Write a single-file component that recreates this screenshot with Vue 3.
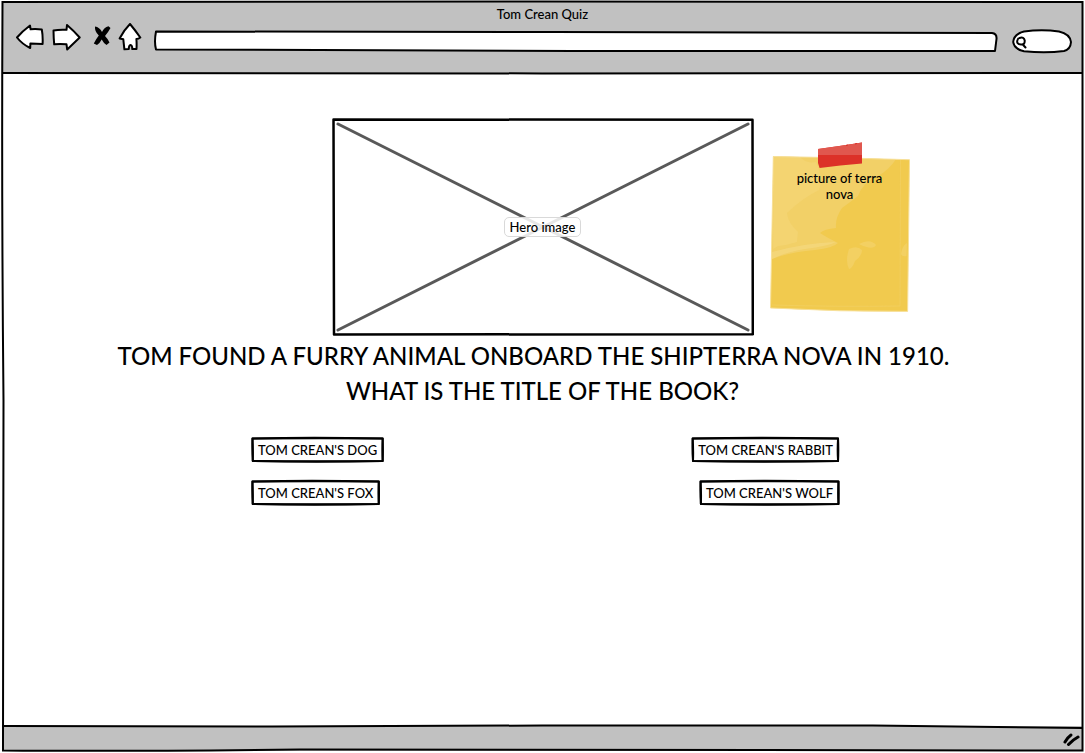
<script setup>
import { ref } from 'vue'

const address = ref('')
const query = ref('')
const chosen = ref('')
const answers = ["TOM CREAN'S DOG", "TOM CREAN'S RABBIT", "TOM CREAN'S FOX", "TOM CREAN'S WOLF"]
</script>

<template>
  <div class="window">
    <header class="chrome">
      <p class="title">Tom Crean Quiz</p>
      <div class="toolbar">
        <nav class="nav" aria-label="Browser">
          <button class="icon-btn" type="button" aria-label="Back">
            <svg width="28" height="28" viewBox="0 0 28 28" class="outline">
              <path d="M1 14.500 Q6 8.500 14 2.500 L14.600 6.300 Q20 5.800 25.800 6.500 Q27 13 26.600 21 Q20 20.600 14.400 20.400 L14.200 25 Q6 21 1 14.500 Z" />
            </svg>
          </button>
          <button class="icon-btn forward" type="button" aria-label="Forward">
            <svg width="30" height="28" viewBox="0 0 30 28" class="outline">
              <path d="M2.500 7.500 Q8 6.400 15.500 6.800 L16 2 Q23 8 28.700 14.500 Q23 20 16.200 26.500 L15.500 21.300 Q9 20.800 3.200 21.300 Q2.600 15 2.500 7.500 Z" />
            </svg>
          </button>
          <button class="icon-btn stop" type="button" aria-label="Stop">
            <svg width="18" height="28" viewBox="0 0 18 28">
              <path d="M2 3.500 Q6.500 4 9 9 Q11 4.500 15.500 3.300 L17.500 5 Q15 9.500 12 13 Q15 16 16.500 19.500 L13.500 22 Q10.500 20 8.700 16.500 Q7 20 4 22 L.8 20.500 Q3 16 5.800 12.500 Q1.500 8.500 2 3.500 Z" />
            </svg>
          </button>
          <button class="icon-btn home" type="button" aria-label="Home">
            <svg width="24" height="28" viewBox="0 0 24 28" class="outline">
              <path d="M12 1 Q17 7 22.300 14.500 Q20.500 15.900 18.400 16 Q18.800 21 18.500 25.900 L14.300 26.100 Q14.300 22.100 12.500 21.900 Q10.800 22.100 10.800 26.100 L6.400 26.300 Q5.800 21 5.300 16.300 L1.600 15.500 Q6 7 12 1 Z" />
            </svg>
          </button>
        </nav>
        <label class="address">
          <svg class="sketch" viewBox="0 0 844 24" preserveAspectRatio="none">
            <path class="fill" d="M3 1.500 L400 2 L838 3 Q843 3.500 842.500 9 L841 21 L420 21 L3 19.500 Q1 12 3 1.500 Z" />
          </svg>
          <input v-model="address" type="text" aria-label="Address" />
        </label>
        <label class="search">
          <svg class="sketch" viewBox="0 0 60 26" preserveAspectRatio="none">
            <path class="fill" d="M12 3.500 Q30 1 47 3.500 Q58 6 59 14 Q58.500 21.500 52 23 Q34 25.500 12 23.300 Q2 21 1.200 14 Q2 6 12 3.500 Z" />
            <path class="lens" d="M7.500 10 Q12 8.500 12.700 12.500 Q13 17 9 16.500 Q4 16 5.500 12 Q6 10 7.500 10 M10.800 16.500 L13.500 19.500" />
          </svg>
          <input v-model="query" type="text" aria-label="Search" />
        </label>
      </div>
      <svg class="rule" viewBox="0 0 1080 4" preserveAspectRatio="none">
        <path d="M0 2 L540 2.400 L1080 2" />
      </svg>
    </header>

    <main class="page">
      <section class="media">
        <figure class="hero">
          <svg class="sketch" viewBox="0 0 422 218" preserveAspectRatio="none">
            <path class="cross" d="M6 6 L416 212 M416 6 L6 212" />
            <path class="frame" d="M1.500 1.500 L420.500 1.800 L420.800 216.200 L2 216.500 Z" />
          </svg>
          <figcaption>Hero image</figcaption>
        </figure>
        <aside class="note">
          <svg class="paper" viewBox="0 0 140 170">
            <path fill="#f1ca4e" d="M3.300 14.500 Q70 15.500 139.500 17.700 L137.600 169.400 Q70 169.800 .5 166 Z" />
            <path fill="#f2d067" d="M3.300 14.500 L126 17.300 Q119 28 108 34 Q93 40 88 54 Q79 61 72 66 Q65 76 66 86 Q54 87 50 91 Q56 95 68 101 Q63 106 45 108 Q20 110 2 117 Z" />
            <path fill="#f4d576" d="M3.300 14.500 L30 15.100 Q36 22 46 20 Q54 37 49 48 Q31 57 17 71 Q18 81 28 90 L27 100 Q18 103 8 104 L3 107 Z" opacity=".65" />
            <path fill="#f5d980" d="M2 110 Q35 101 66 100 Q58 104 35 107 Q16 110 2 117 Z" opacity=".7" />
            <path fill="#f3d062" d="M79 107 Q87 103 92 108 Q92 114 85 119 Q82 127 79 127 Q75 119 79 107 Z M89 102 Q100 96 106 103 Q103 109 89 102 Z M131 112 Q132 104 137 101 L136.500 114 Q132 115 131 112 Z" />
            <path fill="none" stroke="#f7e09a" d="M3.300 14.500 Q70 15.500 139.500 17.700 L137.600 169.400 Q70 169.800 .5 166 Z" />
            <path fill="none" stroke="#f2d063" stroke-width=".7" d="M130.500 18 L130 164 Q70 165 2 163" />
            <path fill="#dc3128" d="M48 7 Q70 4 92 .5 V21.500 Q70 23 49.600 26 L48 21 Z" />
            <path fill="#e0574e" d="M48 7 Q70 4 92 .5 V13 H48 Z" />
            <path fill="none" stroke="#dc3128" stroke-width="1" d="M76 3.500 L78 3 M85 2 L87 1.500" />
          </svg>
          <p>picture of terra nova</p>
        </aside>
      </section>

      <h1>
        <span>TOM FOUND A FURRY ANIMAL ONBOARD THE SHIPTERRA NOVA IN 1910.&nbsp;&nbsp;&nbsp;</span>
        <span>WHAT IS THE TITLE OF THE BOOK?</span>
      </h1>

      <div class="answers">
        <button v-for="answer in answers" :key="answer" class="answer" type="button" @click="chosen = answer">
          <svg class="sketch" viewBox="0 0 134 27" preserveAspectRatio="none">
            <path d="M1.500 2.500 Q60 .8 132.500 2.500 Q131.800 14 132.500 25 Q65 26.500 1.800 25 Q1 13 1.500 2.500 Z" />
            <path d="M1.500 2.500 Q70 2 132.500 2.500 Q133 14 132.500 25 Q65 25.500 1.800 25 Q2.200 13 1.500 2.500 Z" />
          </svg>
          <span>{{ answer }}</span>
        </button>
      </div>
    </main>

    <footer class="status">
      <svg class="rule" viewBox="0 0 1080 6" preserveAspectRatio="none">
        <path d="M0 2 L270 2.500 L540 1.500 L870 1.500 L1080 4" />
      </svg>
      <svg class="grip" width="18" height="14" viewBox="0 0 18 14">
        <path d="M2 10 Q4.500 5.500 8 3 M5.500 12.500 Q9.500 8 15 5" />
      </svg>
    </footer>

    <svg class="outer" viewBox="0 0 1085 753" preserveAspectRatio="none" aria-hidden="true">
      <path d="M2.500 2 L540 1.500 L1082.500 2 Q1083.500 400 1082.500 750.500 Q700 749.500 300 749.500 Q120 751.500 3 750.500 Q2.500 600 3.500 400 Q1.500 200 2.500 2 Z" />
    </svg>
  </div>
</template>

<style>
body {
  margin: 0;
  background: #fff;
}
</style>

<style scoped>
.window {
  position: relative;
  display: flex;
  flex-direction: column;
  box-sizing: border-box;
  min-height: 100vh;
  padding: 2px;
  font-family: Lato, "Liberation Sans", sans-serif;
  font-size: 13px;
  font-weight: 500;
  line-height: 16px;
  color: #000;
}

svg {
  display: block;
}

p,
h1,
figure {
  margin: 0;
}

path {
  vector-effect: non-scaling-stroke;
}

.outer {
  position: absolute;
  inset: 0;
  width: 100%;
  height: 100%;
  fill: none;
  stroke: #000;
  stroke-width: 2px;
  pointer-events: none;
}

.rule {
  width: 100%;
  fill: none;
  stroke: #000;
  stroke-width: 2px;
}

.chrome {
  background: #c1c1c1;
}

.chrome .rule {
  height: 4px;
  background: linear-gradient(transparent 50%, #fff 50%);
}

.title {
  padding-top: 4px;
  text-align: center;
}

.toolbar {
  display: flex;
  align-items: flex-start;
  padding: 0 11px 17px 14px;
}

.nav {
  display: flex;
  align-items: center;
  padding-top: 1px;
}

.icon-btn {
  padding: 0;
  border: 0;
  background: none;
  cursor: pointer;
}

.forward {
  margin-left: 7px;
}

.stop {
  margin-left: 12px;
}

.home {
  margin-left: 7px;
}

.outline {
  fill: #fff;
  stroke: #000;
  stroke-width: 2px;
  stroke-linejoin: round;
}

.sketch {
  position: absolute;
  inset: 0;
  width: 100%;
  height: 100%;
  fill: none;
  stroke: #000;
  stroke-width: 2px;
  stroke-linejoin: round;
  stroke-linecap: round;
}

.sketch .fill {
  fill: #fff;
}

.address,
.search {
  position: relative;
  display: flex;
}

.address {
  flex: 1;
  height: 24px;
  margin: 8px 0 0 11px;
}

.search {
  width: 60px;
  height: 26px;
  margin: 6px 0 0 14px;
}

.address input,
.search input {
  position: relative;
  box-sizing: border-box;
  width: 100%;
  padding: 0 8px;
  border: 0;
  outline: 0;
  background: none;
  font: inherit;
}

.search input {
  padding-left: 18px;
}

.page {
  flex: 1;
  padding-top: 43px;
  background: #fff;
}

.media {
  display: grid;
  grid-template-columns: 1fr minmax(0, 422px) 1fr;
  column-gap: 16px;
}

.hero {
  position: relative;
  display: flex;
  grid-column: 2;
  align-items: center;
  justify-content: center;
  aspect-ratio: 422 / 218;
}

.hero .frame {
  stroke-width: 2.5px;
}

.hero .cross {
  stroke: #595959;
  stroke-width: 3px;
}

.hero figcaption {
  position: relative;
  padding: 1px 5px;
  border: 1px solid #d9d9d9;
  border-radius: 5px;
  background: rgba(255, 255, 255, 0.85);
}

.note {
  position: relative;
  width: 140px;
  margin-top: 24px;
}

.paper {
  width: 100%;
}

.note p {
  position: absolute;
  top: 28px;
  left: 20px;
  right: 20px;
  text-align: center;
}

h1 {
  display: flex;
  flex-direction: column;
  padding-top: 2px;
  font-size: 24px;
  font-weight: 500;
  line-height: 35px;
  text-align: center;
}

.answers {
  display: grid;
  grid-template-columns: auto auto;
  gap: 16px;
  justify-content: space-between;
  box-sizing: border-box;
  max-width: 595px;
  margin: 28px auto 0;
  padding-left: 6px;
}

.answer {
  position: relative;
  justify-self: start;
  height: 27px;
  padding: 0 7px;
  border: 0;
  background: none;
  color: inherit;
  font: inherit;
  cursor: pointer;
}

.answer:nth-child(even) {
  justify-self: end;
}

.status {
  display: flex;
  flex-direction: column;
  align-items: flex-end;
  height: 27px;
  background: #c1c1c1;
}

.status .rule {
  height: 6px;
  background: linear-gradient(#fff 33%, transparent 33%);
}

.grip {
  margin: 2px 2px 0 0;
  fill: none;
  stroke: #000;
  stroke-width: 3px;
  stroke-linecap: round;
}
</style>
